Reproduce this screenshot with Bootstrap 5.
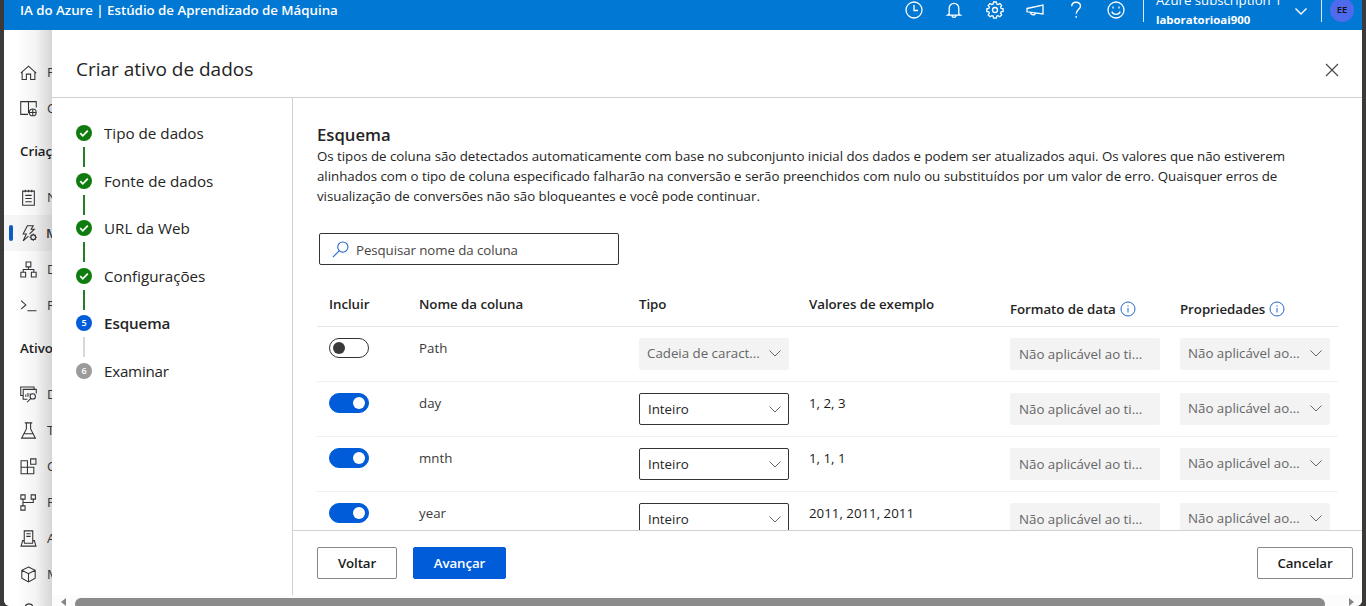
<!DOCTYPE html>
<html lang="pt-BR">
<head>
<meta charset="utf-8">
<title>Criar ativo de dados</title>
<link href="https://cdn.jsdelivr.net/npm/bootstrap@5.3.0/dist/css/bootstrap.min.css" rel="stylesheet">
<style>
  body { height: 606px; overflow: hidden; background: #3b3a39; font: 13.3px/20px "Open Sans", "Noto Sans", sans-serif; color: #242424; }
  svg { display: block; flex: none; fill: none; stroke: currentColor; }
  .app { height: 606px; margin: 0 4px; background: #fff; border-radius: 0 0 6px 6px; overflow: hidden; }
  .topbar { height: 30px; background: #0078d4; color: #fff; }
  .brand { font-size: 13.3px; font-weight: 600; margin: -10px 0 0 16px; letter-spacing: -.02px; }
  .tools { gap: 20.5px; margin: -10px 17px 0 0; height: 20px; }
  .tools svg { width: 20px; height: 20px; }
  .vline { width: 1px; background: #d5e9f8; height: 22px; }
  .account { height: 30px; width: 150px; line-height: 20px; padding-left: 12px; }
  .account div { font-size: 13.2px; margin-top: -10px; }
  .account b { font-size: 11.4px; font-weight: 700; display: block; line-height: 20px; }
  .avatar { width: 24px; height: 24px; background: #4f6bed; color: #111; font-size: 9.5px; font-weight: 600; line-height: 24px; margin-top: -2px; }
  .rail { width: 48px; background: linear-gradient(90deg, #fff 25%, #f4f4f4 65%, #d6d6d6 100%); overflow: hidden; white-space: nowrap; }
  .rail-item { height: 36px; padding-left: 16px; gap: 10px; font-size: 13.3px; color: #333; flex: none; }
  .rail-item svg { width: 17px; height: 17px; stroke-width: 1; }
  .rail-head { height: 49px; padding: 15px 0 0 16px; font-weight: 600; flex: none; color: #1b1b1b; }
  .current { background: #00000009; padding-left: 5px; gap: 8px; font-weight: 600; }
  .current::before { content: ""; flex: none; width: 4px; height: 16px; border-radius: 2px; background: #0f5cc0; }
  .panel-head { height: 68px; border-bottom: 1px solid #d1d1d1; padding: 11px 22px 0 24px; }
  .panel-head h1 { font-size: 19px; line-height: 28px; margin: 0; font-weight: 400; }
  .close-x { color: #444; margin-top: 2px; }
  .steps { width: 241px; border-right: 1px solid #d1d1d1; padding: 27px 0 0 24px; }
  .step { height: 47.6px; gap: 12px; font-size: 15.2px; }
  .step-name { margin-top: -2px; }
  .dot { width: 16px; height: 16px; border-radius: 50%; background: #107c10; color: #fff; font-size: 9px; font-weight: 600; line-height: 16px; text-align: center; }
  .dot.now { background: #015cda; }
  .dot.next { background: #9b9b9b; }
  .link-bar { width: 2px; height: 20px; background: #287d2c; margin: 6px 7px 0; }
  .link-bar.pending { background: #d8d8d8; }
  .content-area { height: 433px; padding: 26px 24px 0; overflow: hidden; border-bottom: 1px solid #d1d1d1; }
  .content-area h2 { font-size: 16.7px; line-height: 22px; margin: 0; font-weight: 600; }
  .intro { white-space: nowrap; margin: 0; letter-spacing: -.022px; }
  .search { width: 300px; height: 32px; margin: 27px 0 0 2px; border: 1px solid #333; border-radius: 2px; padding: 1px 12px 0; gap: 7px; color: #484644; letter-spacing: -.08px; }
  .blue { color: #2266c8; }
  .schema { width: 1021px; table-layout: fixed; margin: 17px 0 0; --bs-table-bg: transparent; }
  .schema th, .schema td { padding: 11px 8px 0 12px; height: 55px; border-bottom: 1px solid #f0f0f0; white-space: nowrap; vertical-align: top; color: #3a3a3a; }
  .schema th { height: 44px; font-weight: 600; padding-top: 12px; border-color: #e6e6e6; color: #242424; letter-spacing: -.05px; }
  .schema th.low { padding-top: 17px; }
  .schema td.sample { color: #1b1b1b; }
  .toggle { width: 40px; height: 20px; border-radius: 10px; background: #015cda; border: 1px solid #015cda; padding: 3px 2px 0 23px; }
  .toggle::before { content: ""; display: block; width: 12px; height: 12px; border-radius: 50%; background: #fff; }
  .toggle.off { background: #fff; border-color: #333; padding-left: 3px; }
  .toggle.off::before { background: #393939; }
  .pick { width: 150px; height: 32px; border: 1px solid #333; border-radius: 2px; padding: 0 6px 0 8px; color: #242424; }
  .pick.disabled { background: #f3f3f3; border-color: #f3f3f3; color: #666; padding-left: 7px; }
  .pick.disabled:has(svg) { padding-bottom: 2px; }
  .pick.fmt { padding-left: 8px; }
  .pick svg { width: 14px; height: 14px; color: #666; }
  .actions { height: 64px; padding: 0 9px 0 24px; gap: 16px; }
  .actions .btn { height: 32px; padding: 0; border-radius: 2px; font-size: 13.3px; font-weight: 600; line-height: 30px; border: 1px solid #8a8886; color: #1b1b1b; background: #fff; letter-spacing: -.1px; }
  .actions .btn.go { background: #015cda; border-color: #015cda; color: #fff; }
  .scroller { height: 11px; background: #fcfcfc; padding: 3px 8px 0 9px; color: #858585; }
  .thumb { height: 12px; border-radius: 6px; background: #8b8b8b; margin: 0 24px 0 9px; }
  .scroller svg { fill: currentColor; stroke: none; }
</style>
</head>
<body>
<svg width="0" height="0" class="position-absolute"><defs>
  <symbol id="chev" viewBox="0 0 14 14"><path d="M1.500 4.500 7 10l5.500-5.500"/></symbol>
  <symbol id="tick" viewBox="0 0 16 16"><path d="m4.200 8.200 2.600 2.600 5-5.200" stroke="#fff" stroke-width="1.700"/></symbol>
  <symbol id="info" viewBox="0 0 16 16"><circle cx="8" cy="8" r="7"/><path d="M8 7v4.500M8 4.400v1.200"/></symbol>
</defs></svg>
<div class="app d-flex flex-column">
  <header class="topbar d-flex align-items-center flex-shrink-0">
    <div class="brand me-auto">IA do Azure | Estúdio de Aprendizado de Máquina</div>
    <div class="tools d-flex align-items-center">
      <svg viewBox="0 0 20 20" stroke-width="1.3"><circle cx="10" cy="10" r="8"/><path d="M10 5v5.500h4"/></svg>
      <svg viewBox="0 0 20 20" stroke-width="1.3"><path d="M5.200 14V8.200a4.800 4.800 0 0 1 9.600 0V14l1.700 1.200h-13zM8 15.500c0 2.400 4 2.400 4 0"/></svg>
      <svg viewBox="0 0 20 20" stroke-width="1.3"><circle cx="10" cy="10" r="2.500"/><path d="m8.600 2-.5 2-1.300.6L5 3.600 3.200 5.500l1.100 1.700-.5 1.300-2 .4v2.500l2 .5.5 1.200-1.100 1.800L5 16.700l1.800-1.100 1.300.5.5 2h2.700l.5-2 1.300-.5 1.800 1.100 1.800-1.800-1.100-1.800.5-1.200 2-.5V8.900l-2-.4-.5-1.300 1.100-1.700-1.800-1.900-1.800 1-1.300-.6-.5-2z"/></svg>
      <svg viewBox="0 0 20 20" stroke-width="1.3"><path d="M2 8.500 18 5v9L2 11.800zM5.500 12.300c0 3.200 5 3.200 5 .7"/></svg>
      <svg viewBox="0 0 20 20" stroke-width="1.4"><path d="M5.700 6.300c0-5.400 8.800-5.400 8.800-.4 0 3.400-4.300 4-4.300 7.800M10.200 16v1.800"/></svg>
      <svg viewBox="0 0 20 20" stroke-width="1.3"><circle cx="10" cy="10" r="8"/><path d="M5.800 11.500c1.300 3.700 7.100 3.700 8.400 0M7 6.500v2M13 6.500v2"/></svg>
    </div>
    <div class="vline align-self-start"></div>
    <div class="account"><div>Azure subscription 1</div><b>laboratorioai900</b></div>
    <svg class="align-self-start mt-1" width="16" height="14" viewBox="0 0 14 14" stroke-width="1.4" style="margin-left:-1px"><use href="#chev"/></svg>
    <div class="vline align-self-start ms-auto" style="margin-left:12px!important"></div>
    <div class="avatar rounded-circle text-center align-self-start ms-2 me-2">EE</div>
  </header>
  <div class="d-flex flex-grow-1" style="min-height:0">
    <nav class="rail d-flex flex-column flex-shrink-0 pt-4">
      <div class="rail-item d-flex align-items-center"><svg viewBox="0 0 16 16"><path d="M2 7.500 8 2l6 5.500V14.500H10V9.500H6v5H2zM.8 8.500 2 7.500M15.200 8.500 14 7.500"/></svg>P</div>
      <div class="rail-item d-flex align-items-center"><svg viewBox="0 0 16 16"><path d="M7.500 13.500H.7v-12H8v11M8 1.500h7.300V7"/><circle cx="12" cy="11.700" r="3.200"/><path d="M8.800 11.700H15.200M12 8.500v6.400"/></svg>C</div>
      <div class="rail-head">Criaç</div>
      <div class="rail-item d-flex align-items-center mt-1"><svg viewBox="0 0 16 16"><path d="M2.500 2h11v13.300h-11zM5 .8V3M8 .8V3M11 .8V3M5 6h6M5 9h6M5 12h6"/></svg>N</div>
      <div class="rail-item current d-flex align-items-center"><svg viewBox="0 0 16 16"><path d="M8 8.500 12.500 4H9.500l2-3.300H6L2 8.500h3L2 15l5-4.500"/><circle cx="11.500" cy="11.500" r="2.200"/><path d="M11.500 8v1.300M11.500 13.700V15M8 11.500h1.300M13.700 11.500H15M9.200 9.200l.7.7M13.200 13.200l.6.6M9.200 13.800l.7-.7M13.200 9.900l.6-.7"/></svg>M</div>
      <div class="rail-item d-flex align-items-center"><svg viewBox="0 0 16 16"><path d="M5.700 1h4.500v4.500H5.700zM.8 10.500h4.500V15H.8zM10.700 10.500h4.500V15h-4.500zM8 5.500V8M3 10.500V8h10v2.500"/></svg>D</div>
      <div class="rail-item d-flex align-items-center"><svg viewBox="0 0 16 16"><path d="m1 3.500 4.500 4L1 11.500M7 13h8.500"/></svg>P</div>
      <div class="rail-head" style="height:53px">Ativo</div>
      <div class="rail-item d-flex align-items-center"><svg viewBox="0 0 16 16"><path d="M2.500 9H.7V1h12.500v2M7 12.500H3V3.200h12.300V7M5.500 10V8M7.500 10V6.500M9.500 8V7"/><circle cx="12" cy="9.800" r="2.500"/><path d="m10.200 11.600-3.500 3.700"/></svg>D</div>
      <div class="rail-item d-flex align-items-center"><svg viewBox="0 0 16 16"><path d="M4.500.8h7M6 .8v5.700L1.500 15.200h13L10 6.500V.8M3.700 11h8.600"/></svg>T</div>
      <div class="rail-item d-flex align-items-center"><svg viewBox="0 0 16 16"><path d="M1 2.500h6v12.300H1zM1 8.700h12v6.100H7M10 .8h5v5h-5z"/></svg>C</div>
      <div class="rail-item d-flex align-items-center"><svg viewBox="0 0 16 16"><path d="M.8.8h4v4h-4zM10.500.8h4v4h-4zM.8 11.200h4v4h-4zM2.800 4.800v6.400M2.800 8h9.700V4.800"/></svg>P</div>
      <div class="rail-item d-flex align-items-center"><svg viewBox="0 0 16 16"><path d="M4 12.500V.8h8v11.700M4 10H2.500L1 15.200h14L13.500 10H12M6 3.500h4M6 6h4M3.800 12.500h8.400"/></svg>A</div>
      <div class="rail-item d-flex align-items-center"><svg viewBox="0 0 16 16"><path d="m8 1 6.300 3v7.500L8 15l-6.300-3.500V4zM1.700 4 8 7.300 14.300 4M8 7.300V15"/></svg>M</div>
      <div class="rail-item d-flex align-items-center"><svg viewBox="0 0 16 16"><path d="M1 9c0-4 4-2 4-5 1-3 6-3 7 0 3 0 3 5 0 5z"/></svg></div>
    </nav>
    <main class="flex-grow-1 d-flex flex-column bg-white">
      <div class="panel-head d-flex justify-content-between align-items-center flex-shrink-0">
        <h1>Criar ativo de dados</h1>
        <svg class="close-x" width="16" height="16" viewBox="0 0 16 16" stroke-width="1.1"><path d="m2 2 12 12M14 2 2 14"/></svg>
      </div>
      <div class="d-flex">
        <aside class="steps flex-shrink-0">
          <div class="step d-flex"><div><div class="dot"><svg width="16" height="16"><use href="#tick"/></svg></div><div class="link-bar"></div></div><div class="step-name">Tipo de dados</div></div>
          <div class="step d-flex"><div><div class="dot"><svg width="16" height="16"><use href="#tick"/></svg></div><div class="link-bar"></div></div><div class="step-name">Fonte de dados</div></div>
          <div class="step d-flex"><div><div class="dot"><svg width="16" height="16"><use href="#tick"/></svg></div><div class="link-bar"></div></div><div class="step-name">URL da Web</div></div>
          <div class="step d-flex"><div><div class="dot"><svg width="16" height="16"><use href="#tick"/></svg></div><div class="link-bar"></div></div><div class="step-name">Configurações</div></div>
          <div class="step d-flex"><div><div class="dot now">5</div><div class="link-bar pending"></div></div><div class="step-name fw-semibold" style="letter-spacing:-.1px">Esquema</div></div>
          <div class="step d-flex"><div><div class="dot next">6</div></div><div class="step-name" style="letter-spacing:-.25px">Examinar</div></div>
        </aside>
        <section class="flex-grow-1" style="min-width:0">
          <div class="content-area">
            <h2>Esquema</h2>
            <p class="intro" style="margin-top:0">Os tipos de coluna são detectados automaticamente com base no subconjunto inicial dos dados e podem ser atualizados aqui. Os valores que não estiverem<br>alinhados com o tipo de coluna especificado falharão na conversão e serão preenchidos com nulo ou substituídos por um valor de erro. Quaisquer erros de<br>visualização de conversões não são bloqueantes e você pode continuar.</p>
            <div class="search d-flex align-items-center"><svg class="blue" width="17" height="17" viewBox="0 0 16 16"><circle cx="10.200" cy="5.700" r="4.800"/><path d="M6.800 9.200.8 15.200"/></svg>Pesquisar nome da coluna</div>
            <table class="table schema">
              <colgroup><col style="width:90px"><col style="width:220px"><col style="width:170px"><col style="width:201px"><col style="width:170px"><col style="width:170px"></colgroup>
              <thead><tr><th>Incluir</th><th>Nome da coluna</th><th>Tipo</th><th>Valores de exemplo</th>
                <th class="low"><div class="d-flex align-items-center gap-1">Formato de data<svg class="blue" width="16" height="16"><use href="#info"/></svg></div></th>
                <th class="low"><div class="d-flex align-items-center gap-1">Propriedades<svg class="blue" width="16" height="16"><use href="#info"/></svg></div></th></tr></thead>
              <tbody id="rows"></tbody>
            </table>
          </div>
          <div class="actions d-flex align-items-center">
            <button class="btn" style="width:80px">Voltar</button>
            <button class="btn go" style="width:93px">Avançar</button>
            <button class="btn ms-auto" style="width:96px">Cancelar</button>
          </div>
        </section>
      </div>
      <div class="scroller d-flex flex-shrink-0">
        <svg width="5" height="8" viewBox="0 0 5 8"><path d="M5 0v8L0 4z"/></svg>
        <div class="thumb flex-grow-1"></div>
        <svg width="5" height="8" viewBox="0 0 5 8"><path d="M0 0v8l5-4z"/></svg>
      </div>
    </main>
  </div>
</div>
<script src="https://cdn.jsdelivr.net/npm/bootstrap@5.3.0/dist/js/bootstrap.bundle.min.js"></script>
<script>
  const chev = '<svg><use href="#chev"/></svg>';
  const columns = [['Path', '', false], ['day', '1, 2, 3', true], ['mnth', '1, 1, 1', true], ['year', '2011, 2011, 2011', true]];
  document.getElementById('rows').innerHTML = columns.map(([name, sample, on]) => `<tr>
    <td><div class="toggle ${on ? '' : 'off'}"></div></td><td>${name}</td>
    <td><div class="pick d-flex align-items-center justify-content-between ${on ? '' : 'disabled'}">${on ? 'Inteiro' : 'Cadeia de caract...'}${chev}</div></td>
    <td class="sample">${sample}</td>
    <td><div class="pick fmt disabled d-flex align-items-center">Não aplicável ao ti...</div></td>
    <td><div class="pick disabled d-flex align-items-center justify-content-between">Não aplicável ao...${chev}</div></td></tr>`).join('');
</script>
</body>
</html>
